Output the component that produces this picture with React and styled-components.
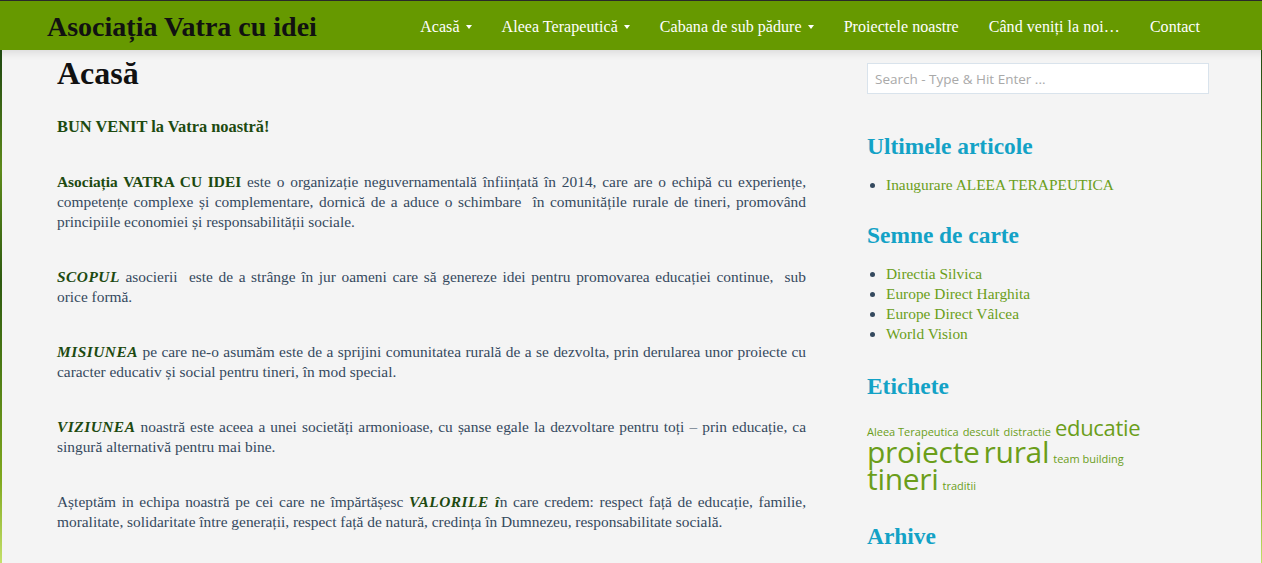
import React from "react";
import styled, { createGlobalStyle } from "styled-components";

const Global = createGlobalStyle`
  html, body { margin: 0; padding: 0; }
  body {
    background: linear-gradient(180deg, #0c3a0c 0%, #264f12 12%, #5d8a1a 30%, #2e5a10 50%, #4b7a14 65%, #7fa81e 85%, #c4e06a 100%);
    font-family: "Liberation Serif", serif;
    height: 563px;
    overflow: hidden;
  }
`;

const Header = styled.header`
  height: 49px;
  border-top: 1px solid #2a2a2a;
  background: #669900;
  display: flex;
  align-items: center;
  justify-content: space-between;
  padding: 0 47px;
`;

const Brand = styled.a`
  font-family: "Liberation Serif", serif;
  font-weight: bold;
  font-size: 28px;
  color: #111;
  text-decoration: none;
  margin-top: 2px;
`;

const Nav = styled.ul`
  display: flex;
  list-style: none;
  margin: 2px 0 0;
  padding: 0;
`;

const NavItem = styled.li`
  padding: 0 15px;
  color: #fff;
  font-family: "Liberation Serif", serif;
  font-size: 16px;
  letter-spacing: 0.05px;
  display: flex;
  align-items: center;
  gap: 6px;
`;

const Caret = styled.span`
  width: 0;
  height: 0;
  border-left: 3px solid transparent;
  border-right: 3px solid transparent;
  border-top: 4px solid #fff;
  margin-top: 1px;
`;

const Page = styled.div`
  margin: 0 1px 0 2px;
  background: #f4f4f4;
  height: 513px;
  box-shadow: inset 0 10px 10px -8px rgba(0, 0, 0, 0.12);
  display: grid;
  grid-template-columns: 749px 342px;
  column-gap: 61px;
  padding-left: 55px;
`;

const Main = styled.main`
  color: #34495e;
  font-size: 15.4px;
  line-height: 20px;
  text-align: justify;
`;

const Title = styled.h1`
  font-family: "Liberation Serif", serif;
  font-size: 32px;
  font-weight: bold;
  color: #111;
  margin: 6px 0 0;
  line-height: 34px;
`;

const Para = styled.p`
  margin: 0 0 35px;
`;

const Lead = styled.p`
  margin: 27px 0 35px;
  font-weight: bold;
  font-size: 16.4px;
  color: #1d4a10;
`;

const Strong = styled.strong`
  color: #1d4a10;
`;

const Keyword = styled.em`
  font-weight: bold;
  font-style: italic;
  color: #1d4a10;
  letter-spacing: 0.5px;
`;

const Side = styled.aside`
  padding-top: 13px;
  display: flex;
  flex-direction: column;
`;

const Search = styled.input`
  box-sizing: border-box;
  width: 342px;
  height: 31px;
  border: 1px solid #d9e3ec;
  background: #fff;
  padding: 0 7px;
  font-family: "Open Sans", sans-serif;
  font-size: 13.5px;
  outline: none;
  &::placeholder { color: #a9a9a9; }
`;

const WidgetTitle = styled.h3`
  font-family: "Liberation Serif", serif;
  font-weight: bold;
  font-size: 23.4px;
  line-height: 26px;
  color: #13a2c6;
  margin: ${(p) => p.$top}px 0 0;
`;

const List = styled.ul`
  margin: 16px 0 0;
  padding-left: 19px;
  font-size: 15.4px;
  line-height: 20px;
  color: #34495e;
`;

const Link = styled.a`
  color: #6b9e1a;
  text-decoration: none;
`;

const Cloud = styled.div`
  margin-top: 17px;
  width: 300px;
  font-family: "Open Sans", sans-serif;
  display: flex;
  flex-wrap: wrap;
  align-items: baseline;
  column-gap: 4px;
`;

const Tag = styled.a`
  color: #6b9e1a;
  text-decoration: none;
  white-space: nowrap;
  font-size: ${(p) => p.$size}px;
  line-height: ${(p) => (p.$size > 25 ? 27 : p.$size)}px;
  letter-spacing: ${(p) => (p.$size > 20 ? "-0.3px" : "0")};
`;

export default function App() {
  return (
    <>
      <Global />
      <Header>
        <Brand>Asociația Vatra cu idei</Brand>
        <Nav>
          <NavItem>Acasă <Caret /></NavItem>
          <NavItem>Aleea Terapeutică <Caret /></NavItem>
          <NavItem>Cabana de sub pădure <Caret /></NavItem>
          <NavItem>Proiectele noastre</NavItem>
          <NavItem>Când veniți la noi…</NavItem>
          <NavItem>Contact</NavItem>
        </Nav>
      </Header>
      <Page>
        <Main>
          <Title>Acasă</Title>
          <Lead>BUN VENIT la Vatra noastră!</Lead>
          <Para>
            <Strong>Asociația VATRA CU IDEI</Strong> este o organizație neguvernamentală înființată în 2014, care are o echipă cu experiențe, competențe complexe și complementare, dornică de a aduce o schimbare&nbsp; în comunitățile rurale de tineri, promovând principiile economiei și responsabilității sociale.
          </Para>
          <Para>
            <Keyword>SCOPUL</Keyword> asocierii&nbsp; este de a strânge în jur oameni care să genereze idei pentru promovarea educației continue,&nbsp; sub orice formă.
          </Para>
          <Para>
            <Keyword>MISIUNEA</Keyword> pe care ne-o asumăm este de a sprijini comunitatea rurală de a se dezvolta, prin derularea unor proiecte cu caracter educativ și social pentru tineri, în mod special.
          </Para>
          <Para>
            <Keyword>VIZIUNEA</Keyword> noastră este aceea a unei societăți armonioase, cu șanse egale la dezvoltare pentru toți – prin educație, ca singură alternativă pentru mai bine.
          </Para>
          <Para>
            Așteptăm in echipa noastră pe cei care ne împărtășesc <Keyword>VALORILE î</Keyword>n care credem: respect față de educație, familie, moralitate, solidaritate între generații, respect față de natură, credința în Dumnezeu, responsabilitate socială.
          </Para>
        </Main>
        <Side>
          <Search placeholder="Search - Type & Hit Enter ..." />
          <WidgetTitle $top={39}>Ultimele articole</WidgetTitle>
          <List>
            <li><Link>Inaugurare ALEEA TERAPEUTICA</Link></li>
          </List>
          <WidgetTitle $top={27}>Semne de carte</WidgetTitle>
          <List>
            <li><Link>Directia Silvica</Link></li>
            <li><Link>Europe Direct Harghita</Link></li>
            <li><Link>Europe Direct Vâlcea</Link></li>
            <li><Link>World Vision</Link></li>
          </List>
          <WidgetTitle $top={29}>Etichete</WidgetTitle>
          <Cloud>
            <Tag $size={11}>Aleea Terapeutica</Tag>
            <Tag $size={11}>descult</Tag>
            <Tag $size={11}>distractie</Tag>
            <Tag $size={22}>educatie</Tag>
            <Tag $size={30}>proiecte</Tag>
            <Tag $size={30}>rural</Tag>
            <Tag $size={11}>team building</Tag>
            <Tag $size={30}>tineri</Tag>
            <Tag $size={11}>traditii</Tag>
          </Cloud>
          <WidgetTitle $top={31}>Arhive</WidgetTitle>
        </Side>
      </Page>
    </>
  );
}
